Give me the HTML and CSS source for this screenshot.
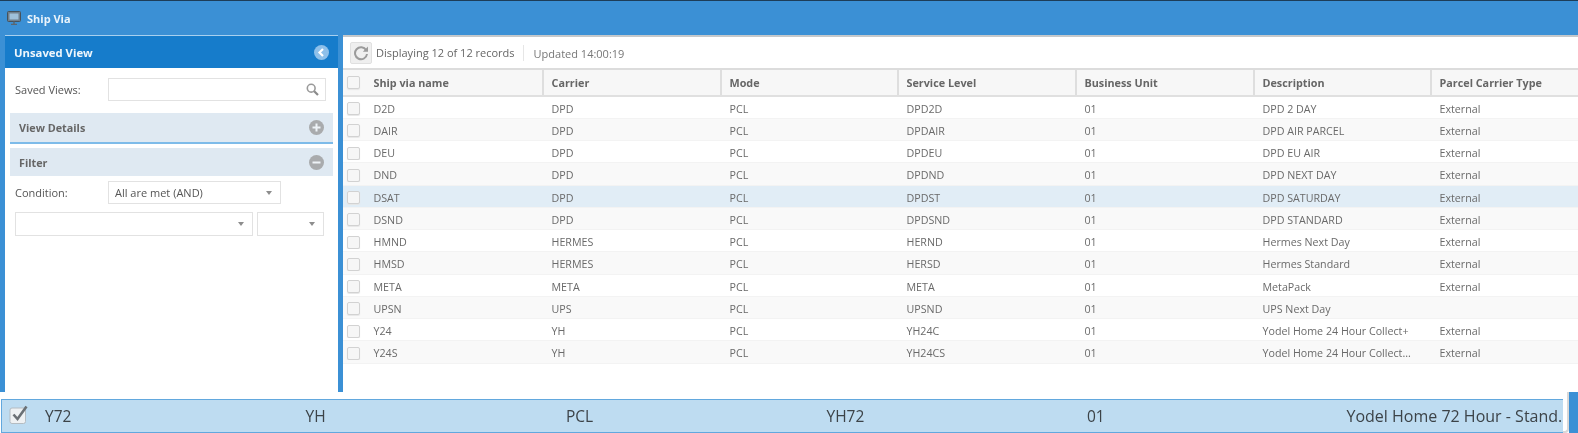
FILE: index.html
```html
<!DOCTYPE html>
<html lang="en">
<head>
<meta charset="utf-8">
<title>Ship Via</title>
<link rel="stylesheet" href="styles.css">
</head>
<body>
<div class="app">
  <header class="titlebar">
    <svg class="title-icon" width="14" height="14" viewBox="0 0 14 14"><rect x="0.5" y="0.5" width="13" height="10" rx="1" fill="#6f7f8c" stroke="#46525c"/><rect x="2.5" y="2.5" width="9" height="6" fill="#9fc0da"/><path d="M4 13.5h6M7 10.5v3" stroke="#5b6670" stroke-width="1.5"/></svg>
    <span class="title-text">Ship Via</span>
  </header>
  <div class="workspace">
    <aside class="side">
      <div class="side-head">
        <span>Unsaved View</span>
        <svg width="15" height="15" viewBox="0 0 15 15"><circle cx="7.5" cy="7.5" r="7.5" fill="#8ec0ea"/><path d="M9 4 5.5 7.5 9 11" fill="none" stroke="#fff" stroke-width="2.2"/></svg>
      </div>
      <div class="form-row saved">
        <label class="lbl">Saved Views:</label>
        <div class="field search-field">
          <svg width="13" height="13" viewBox="0 0 13 13"><circle cx="5.2" cy="5.2" r="3.9" fill="none" stroke="#9a9a9a" stroke-width="1.6"/><path d="m8.2 8.2 3.8 3.8" stroke="#8a8a8a" stroke-width="2.2"/></svg>
        </div>
      </div>
      <div class="section details">
        <span>View Details</span>
        <svg width="15" height="15" viewBox="0 0 15 15"><circle cx="7.5" cy="7.5" r="7.5" fill="#a9abad"/><path d="M3.5 7.5h8M7.5 3.5v8" stroke="#eef3f7" stroke-width="2"/></svg>
      </div>
      <div class="section filter">
        <span>Filter</span>
        <svg width="15" height="15" viewBox="0 0 15 15"><circle cx="7.5" cy="7.5" r="7.5" fill="#a9abad"/><path d="M3.5 7.5h8" stroke="#eef3f7" stroke-width="2"/></svg>
      </div>
      <div class="form-row condition">
        <label class="lbl">Condition:</label>
        <div class="field select cond-select"><span>All are met (AND)</span><i class="caret"></i></div>
      </div>
      <div class="form-row criteria">
        <div class="field select crit-a"><i class="caret"></i></div>
        <div class="field select crit-b"><i class="caret"></i></div>
      </div>
    </aside>
    <main class="main">
      <div class="toolbar">
        <button class="refresh" type="button" aria-label="Refresh">
          <svg width="16" height="16" viewBox="0 0 16 16"><path d="M13.2 5.2A6 6 0 1 0 14 9" fill="none" stroke="#9b9b9b" stroke-width="2"/><path d="M15 1.5v5.2H9.8z" fill="#9b9b9b"/></svg>
        </button>
        <span class="count">Displaying 12 of 12 records</span>
        <span class="updated">Updated 14:00:19</span>
      </div>
      <div class="grid-row head">
        <div class="cell first"><i class="check"></i><span>Ship via name</span></div>
        <div class="cell">Carrier</div><div class="cell">Mode</div><div class="cell">Service Level</div><div class="cell">Business Unit</div><div class="cell">Description</div><div class="cell">Parcel Carrier Type</div>
      </div>
      <div class="grid-row"><div class="cell first"><i class="check"></i><span>D2D</span></div><div class="cell">DPD</div><div class="cell">PCL</div><div class="cell">DPD2D</div><div class="cell">01</div><div class="cell">DPD 2 DAY</div><div class="cell">External</div></div>
      <div class="grid-row alt"><div class="cell first"><i class="check"></i><span>DAIR</span></div><div class="cell">DPD</div><div class="cell">PCL</div><div class="cell">DPDAIR</div><div class="cell">01</div><div class="cell">DPD AIR PARCEL</div><div class="cell">External</div></div>
      <div class="grid-row"><div class="cell first"><i class="check"></i><span>DEU</span></div><div class="cell">DPD</div><div class="cell">PCL</div><div class="cell">DPDEU</div><div class="cell">01</div><div class="cell">DPD EU AIR</div><div class="cell">External</div></div>
      <div class="grid-row alt"><div class="cell first"><i class="check"></i><span>DND</span></div><div class="cell">DPD</div><div class="cell">PCL</div><div class="cell">DPDND</div><div class="cell">01</div><div class="cell">DPD NEXT DAY</div><div class="cell">External</div></div>
      <div class="grid-row hover"><div class="cell first"><i class="check"></i><span>DSAT</span></div><div class="cell">DPD</div><div class="cell">PCL</div><div class="cell">DPDST</div><div class="cell">01</div><div class="cell">DPD SATURDAY</div><div class="cell">External</div></div>
      <div class="grid-row alt"><div class="cell first"><i class="check"></i><span>DSND</span></div><div class="cell">DPD</div><div class="cell">PCL</div><div class="cell">DPDSND</div><div class="cell">01</div><div class="cell">DPD STANDARD</div><div class="cell">External</div></div>
      <div class="grid-row"><div class="cell first"><i class="check"></i><span>HMND</span></div><div class="cell">HERMES</div><div class="cell">PCL</div><div class="cell">HERND</div><div class="cell">01</div><div class="cell">Hermes Next Day</div><div class="cell">External</div></div>
      <div class="grid-row alt"><div class="cell first"><i class="check"></i><span>HMSD</span></div><div class="cell">HERMES</div><div class="cell">PCL</div><div class="cell">HERSD</div><div class="cell">01</div><div class="cell">Hermes Standard</div><div class="cell">External</div></div>
      <div class="grid-row"><div class="cell first"><i class="check"></i><span>META</span></div><div class="cell">META</div><div class="cell">PCL</div><div class="cell">META</div><div class="cell">01</div><div class="cell">MetaPack</div><div class="cell">External</div></div>
      <div class="grid-row alt"><div class="cell first"><i class="check"></i><span>UPSN</span></div><div class="cell">UPS</div><div class="cell">PCL</div><div class="cell">UPSND</div><div class="cell">01</div><div class="cell">UPS Next Day</div><div class="cell"></div></div>
      <div class="grid-row"><div class="cell first"><i class="check"></i><span>Y24</span></div><div class="cell">YH</div><div class="cell">PCL</div><div class="cell">YH24C</div><div class="cell">01</div><div class="cell">Yodel Home 24 Hour Collect+</div><div class="cell">External</div></div>
      <div class="grid-row alt"><div class="cell first"><i class="check"></i><span>Y24S</span></div><div class="cell">YH</div><div class="cell">PCL</div><div class="cell">YH24CS</div><div class="cell">01</div><div class="cell">Yodel Home 24 Hour Collect...</div><div class="cell">External</div></div>
    </main>
  </div>
  <div class="bottom">
    <div class="bottom-wrap">
      <div class="selected-row">
        <svg class="big-check" width="20" height="21" viewBox="0 0 20 21"><rect x="1" y="4" width="15.5" height="15.5" rx="2" fill="#eef1f3" stroke="#b4bcc2"/><path d="M4.5 10.5 8.5 15 17.5 2.5" fill="none" stroke="#6a7075" stroke-width="2.6"/></svg>
        <span>Y72</span><span>YH</span><span>PCL</span><span>YH72</span><span>01</span><span class="last">Yodel Home 72 Hour - Stand.</span>
      </div>
      <div class="row-cap"></div>
    </div>
    <div class="scroll-edge"></div>
  </div>
</div>
</body>
</html>
```

FILE: styles.css
```css
* { box-sizing: border-box; }
html, body { margin: 0; padding: 0; background: #fff; }
body { font-family: "Open Sans", "Noto Sans", "Liberation Sans", sans-serif; font-size: 11px; color: #666; }
.app { width: 1578px; height: 433px; overflow: hidden; display: flex; flex-direction: column; filter: blur(0.35px); }

.titlebar { height: 35px; flex: none; background: #3b90d5; border-top: 1px solid #1d3d58; display: flex; align-items: center; padding-left: 7px; gap: 6px; color: #eaf4fb; font-size: 11px; font-weight: 700; }

.workspace { height: 357px; flex: none; display: flex; background: #3b90d5; padding-left: 5px; }
.side { width: 333px; flex: none; background: #fff; display: flex; flex-direction: column; border-top: 1px solid #a8d0ef; }
.side-head { height: 32px; flex: none; background: #167ccb; color: #eef6fc; font-weight: 700; font-size: 11.3px; display: flex; align-items: center; justify-content: space-between; padding: 0 9px 0 9px; }

.form-row { display: flex; align-items: center; padding-left: 10px; }
.lbl { width: 93px; flex: none; color: #555; font-size: 11px; }
.field { height: 23px; background: #fff; border: 1px solid #e2e2e2; display: flex; align-items: center; justify-content: space-between; padding: 0 6px; color: #555; font-size: 11px; }
.saved { margin-top: 10px; }
.search-field { width: 218px; justify-content: flex-end; }

.section { width: 323px; margin-left: 5px; background: #dfe9f2; color: #666; font-weight: 700; font-size: 10.8px; display: flex; align-items: center; justify-content: space-between; padding: 0 9px; }
.details { height: 31px; margin-top: 12px; border-bottom: 2px solid #7dbbe9; }
.filter { height: 28px; margin-top: 4px; }

.condition { margin-top: 5px; }
.cond-select { width: 173px; }
.criteria { margin-top: 8px; gap: 4px; }
.crit-a { width: 238px; height: 24px; justify-content: flex-end; }
.crit-b { width: 67px; height: 24px; justify-content: flex-end; }
.caret { width: 0; height: 0; border-left: 3.5px solid transparent; border-right: 3.5px solid transparent; border-top: 4px solid #8d8d8d; margin-right: 2px; }

.main { margin-left: 5px; flex: 1; min-width: 0; background: #fff; border-top: 2px solid #c4c8cb; }
.toolbar { height: 33px; display: flex; align-items: center; padding: 1px 0 0 7px; border-bottom: 2px solid #dcdcdc; font-size: 11px; color: #666; }
.refresh { width: 22px; height: 22px; padding: 0; border: 1px solid #e0e0e0; border-radius: 2px; background: #efefef; display: flex; align-items: center; justify-content: center; }
.count { margin-left: 4px; padding-right: 8px; border-right: 1px solid #e6e6e6; line-height: 16px; }
.updated { margin-left: 10px; color: #777; }

.grid-row { display: grid; grid-template-columns: 199px 178px 177px 178px 178px 177px 1fr; height: 22.25px; padding-top: 3px; align-items: center; color: #6a6a6a; font-size: 10.7px; border-bottom: 1px solid #f3f3f3; }
.grid-row.alt { background: #f9f9f9; }
.grid-row.hover { background: #e1edf6; }
.grid-row.head { height: 26.5px; padding-top: 0; background: #f7f7f7; border-bottom: 2px solid #e0e0e0; font-weight: 700; font-size: 10.8px; color: #666; }
.head .cell { height: 100%; display: flex; align-items: center; }
.head .cell + .cell { border-left: 2px solid #dedede; padding-left: 7.5px; }
.cell { padding-left: 9.5px; white-space: nowrap; overflow: hidden; }
.head .cell.first, .cell.first { padding-left: 4px; display: flex; align-items: center; gap: 13.5px; }
.check { width: 13px; height: 13px; flex: none; border: 1px solid #d2d2d2; border-radius: 2px; background: #f6f6f6; box-shadow: 0 1px 1px #e6e6e6; }

.bottom { flex: 1; min-height: 0; display: flex; background: #fff; }
.bottom-wrap { flex: 1; min-width: 0; display: flex; padding: 7px 0 0 1px; }
.selected-row { width: 1562px; height: 34px; flex: none; background: #bedcf1; border: 1px solid #62a8de; border-right: 0; display: grid; grid-template-columns: 43px repeat(5, 260.5px) 1fr; align-items: center; font-size: 15.5px; color: #3c4348; white-space: nowrap; overflow: hidden; }
.big-check { margin-left: 7px; margin-top: -3px; }
.selected-row .last { margin-left: -1px; font-size: 16px; }
.row-cap { width: 6px; margin-top: -7px; background: #fff; border-right: 2px solid #d8d8d8; border-bottom: 2px solid #d8d8d8; border-radius: 0 0 4px 0; }
.scroll-edge { width: 9px; flex: none; background: #3b90d5; }
```
